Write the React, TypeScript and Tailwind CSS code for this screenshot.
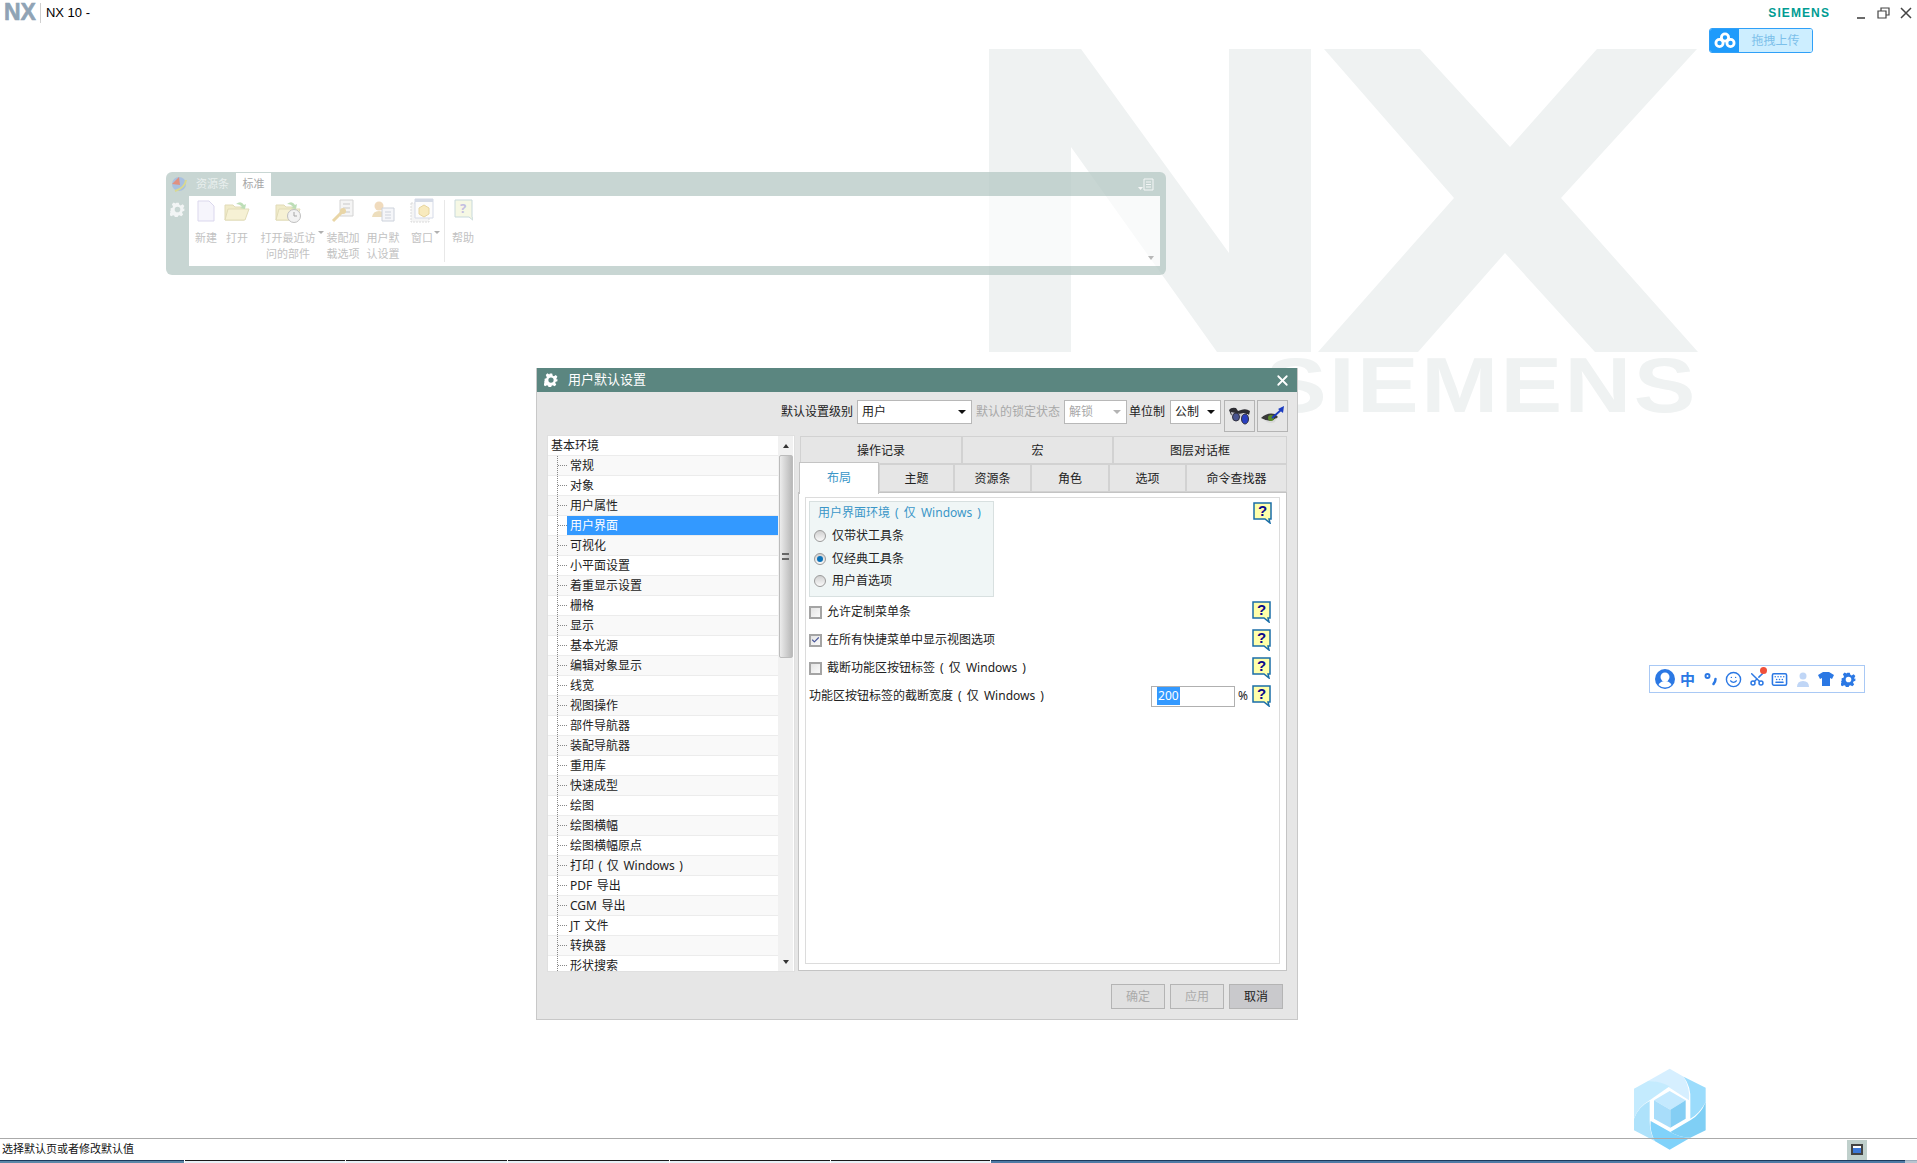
import { Check, Keyboard, Scissors, Smile, X } from "lucide-react";

const treeItems = [
  "常规", "对象", "用户属性", "用户界面", "可视化", "小平面设置", "着重显示设置", "栅格", "显示",
  "基本光源", "编辑对象显示", "线宽", "视图操作", "部件导航器", "装配导航器", "重用库", "快速成型",
  "绘图", "绘图横幅", "绘图横幅原点", "打印 ( 仅 Windows )", "PDF 导出", "CGM 导出", "JT 文件",
  "转换器", "形状搜索",
];

function Watermark() {
  return (
    <>
      <svg className="absolute left-[989px] top-[49px]" width="710" height="304" viewBox="989 49 710 304">
        <polygon
          fill="#eff2f2"
          points="989,49 1081,49 1229,253 1229,49 1311,49 1311,352 1217,352 1071,147 1071,352 989,352"
        />
        <polygon
          fill="#eff2f2"
          points="1324,49 1420,49 1510,147 1597,49 1697,49 1561,198 1698,352 1595,352 1505,253 1418,352 1318,352 1454,198"
        />
      </svg>
      <div className="absolute left-[1265px] top-[341px] origin-left scale-x-[1.2] font-['Liberation_Sans',sans-serif] text-[77px] leading-[88px] font-bold tracking-[2px] text-[#eff2f2]">
        SIEMENS
      </div>
    </>
  );
}

function HexLogo() {
  return (
    <svg className="absolute left-[1633px] top-[1067px]" width="74" height="84" viewBox="100 50 222 252">
      <path fill="#d6efff" d="M145,92 L210,55 L252,79 Q272,115 268,150 L210,112 Q180,92 145,92Z" />
      <path fill="#9bdcfc" d="M252,79 L318,112 L318,155 Q300,190 272,205 L272,150 Q275,110 252,79Z" />
      <path fill="#7fcff5" d="M318,155 L318,240 L272,262 Q240,262 212,245 L272,210 Q305,190 318,155Z" />
      <path fill="#80d2fa" d="M272,262 L210,298 L165,272 Q150,240 153,212 L212,245 Q240,262 272,262Z" />
      <path fill="#aee2fb" d="M165,272 L103,240 L103,205 Q115,170 150,152 L150,212 Q150,245 165,272Z" />
      <path fill="#c4ebfe" d="M103,205 L103,115 L145,92 Q180,92 210,108 L150,150 Q115,170 103,205Z" />
      <polygon fill="#c4e9fe" points="210,122 258,150 212,178 163,150" />
      <polygon fill="#a8ddfa" points="163,150 212,178 212,232 163,205" />
      <polygon fill="#84cef4" points="258,150 258,205 212,232 212,178" />
    </svg>
  );
}

function TitleBar() {
  return (
    <div className="flex h-[26px] items-start">
      <span className="ml-[4px] mt-[-1px] font-['Liberation_Sans',sans-serif] text-[23px] leading-[27px] font-bold text-[#8fa3b5] [-webkit-text-stroke:0.6px_#8fa3b5]">
        NX
      </span>
      <span className="ml-[4px] mt-[3px] h-[20px] w-px bg-[#d0d0d0]" />
      <span className="ml-[5px] mt-[5px] font-['Liberation_Sans',sans-serif] text-[13px] leading-[15px] text-black">
        NX 10 -
      </span>
      <span className="ml-auto mt-[6px] font-['Liberation_Sans',sans-serif] text-[12px] leading-[14px] font-bold tracking-[1.1px] text-[#009c93]">
        SIEMENS
      </span>
      <svg className="ml-[26px] mt-[7px]" width="56" height="13" viewBox="0 0 56 13">
        <path d="M1 11h8" stroke="#444" strokeWidth="1.6" />
        <path d="M22 4h8v7h-8zM25 4V1h8v7h-3" fill="none" stroke="#444" strokeWidth="1.2" />
        <path d="M45 1l10 10M55 1L45 11" stroke="#444" strokeWidth="1.5" />
      </svg>
      <span className="w-[5px]" />
    </div>
  );
}

function UploadButton() {
  return (
    <div className="absolute left-[1709px] top-[28px] flex h-[25px] w-[104px] overflow-hidden rounded-[3px] border border-[#2fa0f8]">
      <div className="flex w-[29px] items-center justify-center bg-[#1f9bfb]">
        <svg width="22" height="17" viewBox="0 0 22 17" fill="none" stroke="#fff" strokeWidth="2.8">
          <circle cx="11" cy="5.500" r="3.600" />
          <circle cx="5.500" cy="11" r="3.600" />
          <circle cx="16.500" cy="11" r="3.600" />
        </svg>
      </div>
      <div className="flex flex-1 items-center justify-center bg-[#cdeeff] text-[12px] text-[#7cc0ea]">拖拽上传</div>
    </div>
  );
}

function RibbonIcon({ kind }: { kind: string }) {
  if (kind === "new") {
    return (
      <svg width="18" height="22" viewBox="0 0 18 22">
        <path d="M1 1h11l5 5v15H1z" fill="#f4f2fb" stroke="#cfcbe8" />
      </svg>
    );
  }
  if (kind === "open" || kind === "recent") {
    return (
      <svg width="26" height="24" viewBox="0 0 26 24">
        <path d="M1 6h8l2 2h9v13H1z" fill="#ece5b8" stroke="#d8d0a0" />
        <path d="M4 10h21l-4 11H1z" fill="#f3edc6" stroke="#d8d0a0" />
        <path d="M12 5q5-4 8 1l2-1-1 5-5-1 2-1q-2-3-6-3z" fill="#a8d4a0" />
        {kind === "recent" && <circle cx="19" cy="17" r="6.5" fill="#eee" stroke="#aaa" />}
        {kind === "recent" && <path d="M19 13v4h3" fill="none" stroke="#888" />}
      </svg>
    );
  }
  if (kind === "assembly") {
    return (
      <svg width="24" height="24" viewBox="0 0 24 24">
        <path d="M9 1h13v16H9z" fill="#f2f2f2" stroke="#c6c6c6" />
        <path d="M12 5h7M12 9h7M12 13h7" stroke="#b8b8b8" />
        <path d="M2 22l9-9" stroke="#e2c98a" strokeWidth="3" />
        <circle cx="12" cy="12" r="3" fill="#e2c98a" />
      </svg>
    );
  }
  if (kind === "user") {
    return (
      <svg width="24" height="24" viewBox="0 0 24 24">
        <circle cx="8" cy="7" r="4.5" fill="#eccfa8" />
        <path d="M1 18q1-6 7-6t7 6z" fill="#e8d4a8" />
        <path d="M11 9h12v13H11z" fill="#f2f4f8" stroke="#bcc4d0" />
        <path d="M14 13h6M14 16h6M14 19h6" stroke="#bcc4d0" />
      </svg>
    );
  }
  if (kind === "window") {
    return (
      <svg width="24" height="25" viewBox="0 0 24 25">
        <path d="M1 5h18v19H1z" fill="#f2f2f2" stroke="#d0d0d0" strokeDasharray="2 1" />
        <path d="M5 1h18v19H5z" fill="#fbfbfb" stroke="#c8cfe0" />
        <path d="M5 1h18v3H5z" fill="#c8cfe0" />
        <path d="M9 10l5-3 5 3v6l-5 3-5-3z" fill="#f6e3a8" stroke="#e0c880" />
      </svg>
    );
  }
  return (
    <svg width="19" height="24" viewBox="0 0 19 24">
      <path d="M1 1h17v17l2 4-5-4H1z" fill="#f4f6dc" stroke="#b6cdd0" />
      <text x="9" y="14" textAnchor="middle" fontSize="13" fontWeight="700" fill="#b0aad8">?</text>
    </svg>
  );
}

function RibbonItem({ kind, width, lines, menu }: { kind: string; width: string; lines: string[]; menu?: boolean }) {
  return (
    <div className={`${width} relative flex flex-col items-center`}>
      <div className="flex h-[27px] items-center opacity-75">
        <RibbonIcon kind={kind} />
      </div>
      <div className="mt-[6px] text-center text-[11px] leading-[16px] whitespace-nowrap text-[#c2c2c2]">
        {lines.map((line) => (
          <div key={line}>{line}</div>
        ))}
      </div>
      {menu && <span className="absolute right-[0px] top-[34px] h-0 w-0 border-x-[3px] border-t-[3px] border-x-transparent border-t-[#b0b0b0]" />}
    </div>
  );
}

function GearIcon({ color, size }: { color: string; size: number }) {
  return (
    <svg width={size} height={size} viewBox="0 0 24 24">
      <path
        fill={color}
        fillRule="evenodd"
        d="M10 1h4l1 3.5 2 .9 3.2-1.8 2.800 2.800-1.800 3.200.8 1.900L23 10v4l-3 1-.8 1.900 1.800 3.200-2.800 2.800-3.200-1.800-2 .9-1 3h-4l-1-3-2-.9-3.200 1.800-2.800-2.800 1.800-3.200-.8-1.900L1 14v-4l3-1 .8-1.900L3 3.400 5.800.6 9 2.400zM12 7.500a4.500 4.500 0 100 9 4.500 4.500 0 000-9z"
      />
    </svg>
  );
}

function RibbonWindow() {
  return (
    <div className="absolute left-[166px] top-[172px] flex h-[103px] w-[1000px] flex-col">
      <div className="flex h-[24px] items-end rounded-t-[6px] bg-[#b6c8c4]/75">
        <svg className="mb-[3px] ml-[5px]" width="16" height="17" viewBox="0 0 16 17">
          <circle cx="8" cy="8" r="7" fill="#a8c0e0" />
          <path d="M1 8l7-7 1 8z" fill="#e09080" />
          <path d="M4 15Q14 12 15 4" stroke="#d8d890" strokeWidth="2" fill="none" />
        </svg>
        <span className="mb-[5px] ml-[9px] text-[11px] leading-[14px] text-[#e8efee]">资源条</span>
        <span className="ml-[7px] flex h-[23px] w-[35px] items-center justify-center bg-white text-[11px] text-[#a8a8a8]">标准</span>
        <svg className="mb-[5px] ml-auto mr-[12px]" width="16" height="13" viewBox="0 0 16 13">
          <path d="M0 9h5l-2.500 3z" fill="#f4f6f6" />
          <path d="M6 1h9v11H6zM8 4h5M8 6.500h5M8 9h5" fill="none" stroke="#f4f6f6" />
        </svg>
      </div>
      <div className="flex h-[70px]">
        <div className="flex w-[23px] justify-center bg-[#b6c8c4]/75 pt-[6px]">
          <GearIcon color="#f2f5f5" size={15} />
        </div>
        <div className="relative flex flex-1 bg-white/60 pl-[1px] pt-[1px]">
          <RibbonItem kind="new" width="w-[32px]" lines={["新建"]} />
          <RibbonItem kind="open" width="w-[30px]" lines={["打开"]} />
          <RibbonItem kind="recent" width="w-[72px]" lines={["打开最近访", "问的部件"]} menu />
          <RibbonItem kind="assembly" width="w-[38px]" lines={["装配加", "载选项"]} />
          <RibbonItem kind="user" width="w-[42px]" lines={["用户默", "认设置"]} />
          <RibbonItem kind="window" width="w-[36px]" lines={["窗口"]} menu />
          <span className="mx-[4px] my-[3px] h-[62px] w-px bg-[#e8e8e8]" />
          <RibbonItem kind="help" width="w-[28px]" lines={["帮助"]} />
          <span className="absolute bottom-[6px] right-[6px] h-0 w-0 border-x-[3px] border-t-[4px] border-x-transparent border-t-[#b8b8b8]" />
        </div>
        <div className="w-[6px] bg-[#b6c8c4]/75" />
      </div>
      <div className="h-[9px] rounded-b-[6px] bg-[#b6c8c4]/75" />
    </div>
  );
}

function ImeBar() {
  return (
    <div className="absolute left-[1649px] top-[665px] flex h-[28px] w-[216px] items-center border border-[#a9c9f5] bg-white pl-[3px] text-[#2b78e4]">
      <span className="flex w-[23px] justify-center">
        <svg width="20" height="20" viewBox="0 0 20 20">
          <circle cx="10" cy="10" r="10" fill="#2b78e4" />
          <circle cx="10" cy="8" r="4.500" fill="#fff" />
          <path d="M3.500 16q2-4 6.500-4t6.500 4q-6.500 5-13 0z" fill="#fff" />
        </svg>
      </span>
      <span className="flex w-[23px] justify-center text-[15px] leading-none font-bold">中</span>
      <span className="flex w-[23px] justify-center">
        <svg width="14" height="14" viewBox="0 0 14 14" fill="none" stroke="#2b78e4" strokeWidth="2">
          <circle cx="3.500" cy="4" r="2" />
          <path d="M11.500 7q0 3-2 5" strokeLinecap="round" strokeWidth="2.500" />
        </svg>
      </span>
      <span className="flex w-[23px] justify-center">
        <Smile size={17} strokeWidth={2} />
      </span>
      <span className="relative flex w-[23px] justify-center">
        <Scissors size={16} strokeWidth={2.2} className="-rotate-90" />
        <span className="absolute right-[1px] top-[-4px] h-[7px] w-[7px] rounded-full bg-[#f0503a]" />
      </span>
      <span className="flex w-[23px] justify-center">
        <Keyboard size={17} strokeWidth={2.2} />
      </span>
      <span className="flex w-[23px] justify-center">
        <svg width="14" height="15" viewBox="0 0 14 15" fill="#c0d6f6">
          <circle cx="7" cy="4" r="3.500" />
          <path d="M1 15q0-6 6-6t6 6z" />
        </svg>
      </span>
      <span className="flex w-[23px] justify-center">
        <svg width="16" height="14" viewBox="0 0 16 14" fill="#2b78e4">
          <path d="M5 0h6l5 3-2 4-2-1v8H4V6L2 7 0 3z" />
        </svg>
      </span>
      <span className="flex w-[23px] justify-center">
        <GearIcon color="#2b78e4" size={15} />
      </span>
    </div>
  );
}

function SelectBox({ value, width, disabled }: { value: string; width: string; disabled?: boolean }) {
  return (
    <div className={`${width} flex h-[24px] items-center border border-[#b8b8b8] bg-white pl-[4px] pr-[5px] text-[12px] ${disabled ? "text-[#a8a8a8]" : "text-[#222]"}`}>
      <span className="flex-1">{value}</span>
      <span className={`h-0 w-0 border-x-[4px] border-t-[4px] border-x-transparent ${disabled ? "border-t-[#b4b4b4]" : "border-t-[#111]"}`} />
    </div>
  );
}

function IconButton({ kind }: { kind: "find" | "eye" }) {
  return (
    <div className="flex h-[32px] w-[31px] items-center justify-center border border-[#b4b4b4] bg-[#e6e6e6]">
      {kind === "find" ? (
        <svg width="23" height="20" viewBox="0 0 23 20">
          <path d="M1 4q2-3 7-2l2 3 3-1q5-2 9 1l-1 4-5-2-5 1-5 2-3-1z" fill="#2d2d33" />
          <path d="M3 6l9 2 8 0 1 2-6 1-5 1-6-2z" fill="#c9c9d2" />
          <ellipse cx="8" cy="11" rx="3.500" ry="4" fill="#4a5590" stroke="#303040" />
          <ellipse cx="17" cy="13" rx="3.500" ry="5" fill="#2a3fc0" stroke="#303040" />
        </svg>
      ) : (
        <svg width="25" height="20" viewBox="0 0 25 20">
          <path d="M1 12q6-6 14-4l3 3q-7 7-17 1z" fill="#3a3a3a" />
          <path d="M3 13q7 5 13-1l-1 4q-6 3-12-3z" fill="#d8d8d8" />
          <circle cx="11" cy="12" r="3" fill="#5a8a2a" />
          <path d="M12 12L21 4" stroke="#1c3cc0" strokeWidth="1.800" />
          <path d="M24 0l-1 7-5-4z" fill="#1c3cc0" />
        </svg>
      )}
    </div>
  );
}

function TreePane() {
  return (
    <div className="flex h-[537px] w-[248px] border border-[#e0e0e0] bg-white">
      <div className="w-[230px] overflow-hidden">
        <div className="flex h-[20px] items-center border-b border-[#ececec] pl-[3px] text-[12px] text-[#222]">基本环境</div>
        {treeItems.map((item, i) => {
          const selected = item === "用户界面";
          const zebra = i % 2 === 0 ? "bg-[#f9f9f9]" : "bg-white";
          return (
            <div key={item} className={`${zebra} flex h-[20px] items-stretch border-b border-[#ececec] pl-[9px] text-[12px] [word-spacing:1.5px]`}>
              <span className="border-l border-dotted border-[#888]" />
              <span className="mt-[9px] h-0 w-[9px] border-t border-dotted border-[#888]" />
              <span className={`flex flex-1 items-center pl-[3px] ${selected ? "bg-[#3399ff] text-white" : "text-[#222]"}`}>{item}</span>
            </div>
          );
        })}
      </div>
      <div className="flex w-[15px] flex-col items-center bg-[#f1f1f1]">
        <span className="mb-[7px] mt-[8px] h-0 w-0 border-x-[3px] border-b-[4px] border-x-transparent border-b-[#333]" />
        <div className="flex h-[203px] w-[14px] items-center justify-center rounded-[2px] border border-[#bcbcbc] bg-gradient-to-r from-[#ececec] to-[#b8b8b8]">
          <span className="h-[7px] w-[7px] border-y-2 border-double border-[#666]" />
        </div>
        <span className="mt-auto mb-[7px] h-0 w-0 border-x-[3px] border-t-[4px] border-x-transparent border-t-[#333]" />
      </div>
    </div>
  );
}

function Tab({ label, width }: { label: string; width: string }) {
  return (
    <div className={`${width} flex h-[28px] items-center justify-center border border-[#d2d2d2] bg-[#e6e6e6] pt-px text-[12px] text-[#222]`}>
      {label}
    </div>
  );
}

function HelpIcon() {
  return (
    <svg width="19" height="22" viewBox="0 0 19 22" className="shrink-0">
      <path d="M1 1h17v16h-2l1 4-5-4H1z" fill="#ffffaa" stroke="#1a6ea8" strokeWidth="1.500" />
      <text x="9.500" y="14" textAnchor="middle" fontSize="15" fontWeight="700" fontFamily="Liberation Sans" fill="#0a0a8a">?</text>
    </svg>
  );
}

function Radio({ label, checked }: { label: string; checked?: boolean }) {
  return (
    <div className="flex h-[22.500px] items-center">
      <span className="flex h-[12px] w-[12px] items-center justify-center rounded-full border border-[#9a9a9a] bg-gradient-to-b from-[#d0d0d0] to-[#fafafa]">
        {checked && <span className="h-[6px] w-[6px] rounded-full bg-[#0a72b8]" />}
      </span>
      <span className="ml-[6px] text-[12px] text-[#222]">{label}</span>
    </div>
  );
}

function CheckRow({ label, checked }: { label: string; checked?: boolean }) {
  return (
    <div className="flex h-[28px] items-center pr-[8px]">
      <span className="flex h-[13px] w-[13px] items-center justify-center border-2 border-[#a4a4a4] bg-gradient-to-br from-[#e4e4e4] to-[#fafafa]">
        {checked && <Check size={10} strokeWidth={3} className="text-[#47559a]" />}
      </span>
      <span className="ml-[5px] flex-1 text-[12px] [word-spacing:2px] text-[#222]">{label}</span>
      <HelpIcon />
    </div>
  );
}

function SettingsPanel() {
  return (
    <div className="flex w-[489px] flex-col pt-px">
      <div className="ml-[2px] flex">
        <Tab label="操作记录" width="w-[162px]" />
        <Tab label="宏" width="w-[151px]" />
        <Tab label="图层对话框" width="w-[174px]" />
      </div>
      <div className="relative z-10 ml-px flex">
        <div className="-my-[2px] flex h-[32px] w-[80px] items-center justify-center border border-b-0 border-[#c4c4c4] bg-white pb-[2px] text-[12px] text-[#3a96c8]">布局</div>
        <Tab label="主题" width="w-[75px]" />
        <Tab label="资源条" width="w-[77px]" />
        <Tab label="角色" width="w-[78px]" />
        <Tab label="选项" width="w-[77px]" />
        <Tab label="命令查找器" width="w-[101px]" />
      </div>
      <div className="h-[479px] border border-[#c4c4c4] bg-white px-[6px] pb-[6px] pt-[4px]">
        <div className="h-full border border-[#dcdcdc] pl-[3px] pt-[3px]">
          <div className="flex items-start pr-[7px]">
            <div className="h-[96px] w-[185px] border border-[#d8e0e0] bg-[#f0f6f6] pl-[4px]">
              <div className="ml-[4px] mt-[2px] h-[21px] text-[12px] leading-[17px] [word-spacing:2px] text-[#3a96c8]">用户界面环境 ( 仅 Windows )</div>
              <Radio label="仅带状工具条" />
              <Radio label="仅经典工具条" checked />
              <Radio label="用户首选项" />
            </div>
            <div className="ml-auto mt-[1px]">
              <HelpIcon />
            </div>
          </div>
          <div className="mt-px">
            <CheckRow label="允许定制菜单条" />
            <CheckRow label="在所有快捷菜单中显示视图选项" checked />
            <CheckRow label="截断功能区按钮标签 ( 仅 Windows )" />
            <div className="flex h-[28px] items-center pr-[8px]">
              <span className="flex-1 text-[12px] [word-spacing:2px] text-[#222]">功能区按钮标签的截断宽度 ( 仅 Windows )</span>
              <div className="flex h-[21px] w-[84px] items-center border border-[#b0b0b0] pl-[5px] text-[12px]">
                <span className="bg-[#3399ff] px-px text-white">200</span>
              </div>
              <span className="ml-[3px] mr-[4px] text-[12px] text-[#222]">%</span>
              <HelpIcon />
            </div>
          </div>
        </div>
      </div>
    </div>
  );
}

function FooterButton({ label, enabled }: { label: string; enabled?: boolean }) {
  return (
    <div className={`flex h-[25px] w-[54px] items-center justify-center border border-[#b4b4b4] text-[12px] ${enabled ? "bg-[#c9c9cc] text-[#222]" : "bg-[#e0e0e0] text-[#aaaaaa]"}`}>
      {label}
    </div>
  );
}

function SettingsDialog() {
  return (
    <div className="absolute left-[536px] top-[368px] flex h-[652px] w-[762px] flex-col border-x border-b border-[#c8c8c8] bg-[#e6e6e6]">
      <div className="flex h-[24px] items-center bg-[#5b8680] pl-[7px] pr-[6px] text-[13px] text-white">
        <GearIcon color="#fff" size={14} />
        <span className="ml-[10px]">用户默认设置</span>
        <X size={17} strokeWidth={2.5} className="ml-auto" />
      </div>
      <div className="flex h-[43px] items-start justify-end pr-[9px] pt-[8px] text-[12px] leading-[24px]">
        <span className="mr-[4px] text-[#222]">默认设置级别</span>
        <SelectBox value="用户" width="w-[115px]" />
        <span className="ml-[4px] mr-[4px] text-[#a8a8a8]">默认的锁定状态</span>
        <SelectBox value="解锁" width="w-[63px]" disabled />
        <span className="ml-[2px] mr-[5px] text-[#222]">单位制</span>
        <SelectBox value="公制" width="w-[51px]" />
        <span className="w-[3px]" />
        <IconButton kind="find" />
        <span className="w-[2px]" />
        <IconButton kind="eye" />
      </div>
      <div className="flex pl-[10px]">
        <TreePane />
        <span className="w-[3px]" />
        <SettingsPanel />
      </div>
      <div className="mt-[12px] flex justify-end gap-[5px] pr-[14px]">
        <FooterButton label="确定" />
        <FooterButton label="应用" />
        <FooterButton label="取消" enabled />
      </div>
    </div>
  );
}

function StatusBar() {
  return (
    <div className="relative flex h-[22px] items-center border-t border-[#aaaaaa] pl-[2px] text-[11px] text-[#111]">
      <span>选择默认页或者修改默认值</span>
      <div className="ml-auto mr-[50px] flex h-[20px] w-[20px] items-center justify-center bg-[#c0d0cc]">
        <span className="flex h-[11px] w-[12px] items-end border-2 border-[#444] bg-white">
          <span className="h-[5px] w-full bg-[#3c78d8]" />
        </span>
      </div>
    </div>
  );
}

function TaskBar() {
  return (
    <div className="relative flex h-[3px]">
      <div className="w-[184px] border-t border-[#1c3a5c] bg-[#5a87a8]" />
      <div className="ml-px w-[160px] border-t border-[#1a1a1a] bg-[#e8f0f6]" />
      <div className="ml-px w-[161px] border-t border-[#1a1a1a] bg-[#e8f0f6]" />
      <div className="ml-px w-[161px] border-t border-[#1a1a1a] bg-[#e8f0f6]" />
      <div className="ml-px w-[160px] border-t border-[#1a1a1a] bg-[#e8f0f6]" />
      <div className="ml-px w-[159px] border-t border-[#1a1a1a] bg-[#e8f0f6]" />
      <div className="ml-px flex-1 border-t border-[#1c3a5c] bg-[#4d7aa5]" />
      <div className="w-[12px] border-t border-[#9aa8b8] bg-[#b8c4d0]" />
    </div>
  );
}

export default function App() {
  return (
    <div className="relative flex h-[1163px] w-[1917px] flex-col overflow-hidden bg-white font-['Noto_Sans','Noto_Sans_CJK_SC',sans-serif]">
      <Watermark />
      <HexLogo />
      <div className="relative">
        <TitleBar />
      </div>
      <div className="flex-1" />
      <StatusBar />
      <TaskBar />
      <UploadButton />
      <RibbonWindow />
      <ImeBar />
      <SettingsDialog />
    </div>
  );
}
